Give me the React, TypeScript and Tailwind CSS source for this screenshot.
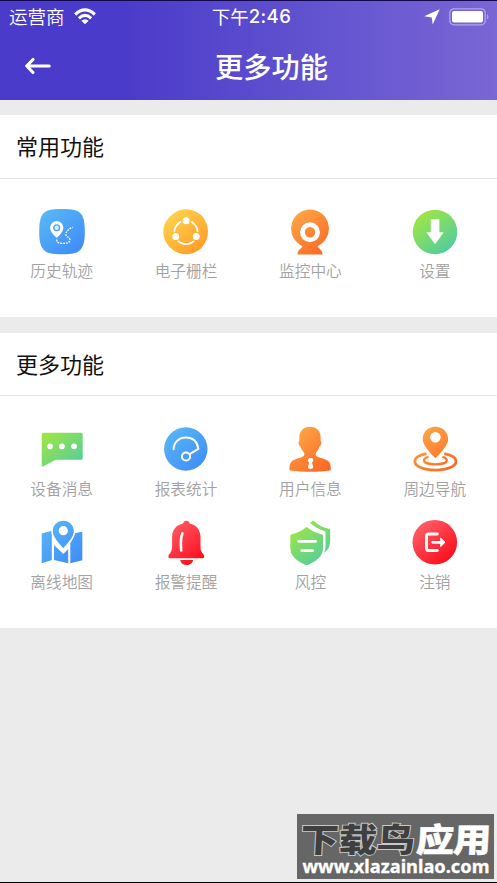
import React from "react";

const paints: Record<string, [string, string]> = {
  blue: ["#58b7f5", "#3f8cf8"],
  yellow: ["#ffd64e", "#ff9a26"],
  orange: ["#ffa947", "#fa6725"],
  green: ["#a5e83d", "#4dcba4"],
  red: ["#ff626b", "#fd0716"],
};

function Icon({ id, paint, children }: { id: string; paint: string; children: React.ReactNode }) {
  return (
    <svg viewBox="0 0 50 50" className="block size-[50px]" fill={`url(#${id})`}>
      <defs>
        <linearGradient id={id} gradientUnits="userSpaceOnUse" x1="8" y1="5" x2="42" y2="46">
          <stop offset="0" stopColor={paints[paint][0]} />
          <stop offset="1" stopColor={paints[paint][1]} />
        </linearGradient>
      </defs>
      {children}
    </svg>
  );
}

const white = { fill: "none", stroke: "#fff", strokeLinecap: "round", strokeLinejoin: "round" } as const;

const common = [
  {
    label: "历史轨迹",
    icon: (
      <Icon id="track" paint="blue">
        <path d="M25 3C36 3 41 4 44.500 8.500C47 12 47.800 18 47.800 25.700C47.800 33.500 47 39 44 43C40.500 47.500 35 48.300 25 48.300C15 48.300 9.500 47.500 6 43C3 39 2.200 33.500 2.200 25.700C2.200 18 3 12 5.500 8.500C9 4 14 3 25 3Z" />
        <path fill="#fff" d="M19.700 15a6.600 6.600 0 0 1 6.600 6.600c0 4-3.600 7.600-6.600 10.400c-3-2.800-6.600-6.400-6.600-10.400a6.600 6.600 0 0 1 6.600-6.600Z" />
        <circle cx="19.700" cy="21.800" r="2.900" fill="#d9edff" stroke="#4ba3f7" strokeWidth="1.300" />
        <path {...white} strokeLinecap="butt" strokeWidth="1.300" strokeDasharray="1.800 1" d="M19.700 33.500c.2 3 2 3.800 5 3.800c4 0 8 .2 8.200-3.300c.2-3-4.500-3.200-4-6c.3-3 3.600-5.600 6.800-6.700" />
      </Icon>
    ),
  },
  {
    label: "电子栅栏",
    icon: (
      <Icon id="fence" paint="yellow">
        <path d="M24.600 3.200C31 3 37 6 40.500 9.500C44.500 13.500 47 20 47 25.800C47 32 44 38 40.500 41.700C36.500 46 31 48.200 24.600 48.200C18 48.200 12.500 45 8.800 41.300C5 37.500 2.300 32 2.300 25.800C2.300 19 5 15 8.700 11C12.500 6.500 18 3.400 24.600 3.200Z" />
        <circle cx="25" cy="26.300" r="11.700" {...white} strokeWidth="1.800" />
        <g stroke="url(#fence)" strokeWidth="1.600" fill="#fff">
          <circle cx="25" cy="14.800" r="4.300" />
          <circle cx="14.700" cy="30.500" r="4.300" />
          <circle cx="35.200" cy="30.500" r="4.300" />
        </g>
      </Icon>
    ),
  },
  {
    label: "监控中心",
    icon: (
      <Icon id="camera" paint="orange">
        <path d="M25 3.500a19 19 0 0 1 12 33.700c-1.300 1.200-3.400 2.200-4.200 3c-.5 1.500 4.500 3.500 4.700 7.200q0 1.200-1 1.200h-23q-1 0-1-1.200c.2-3.700 5.200-5.700 4.700-7.200c-.8-.8-2.900-1.800-4.200-3A19 19 0 0 1 25 3.500Z" />
        <circle cx="25" cy="26.300" r="7.600" {...white} strokeWidth="4.800" />
      </Icon>
    ),
  },
  {
    label: "设置",
    icon: (
      <Icon id="settings" paint="green">
        <circle cx="25" cy="26" r="22.300" />
        <path fill="#fff" d="M20.800 13.300h8.600v12.900h4.400L25.100 38.200L16.400 26.200h4.400Z" />
      </Icon>
    ),
  },
];

const more = [
  {
    label: "设备消息",
    icon: (
      <Icon id="message" paint="green">
        <path d="M6.200 8.700H44.200q1.500 0 1.500 1.500v24q0 1.500-1.500 1.500H18.700L7 42.100q-2.300 1-2.300-1.300V10.200q0-1.500 1.500-1.500Z" />
        <g fill="#fff">
          <circle cx="13" cy="22.300" r="2.900" />
          <circle cx="24.900" cy="22.300" r="2.900" />
          <circle cx="37" cy="22.300" r="2.900" />
        </g>
      </Icon>
    ),
  },
  {
    label: "报表统计",
    icon: (
      <Icon id="report" paint="blue">
        <circle cx="24.800" cy="25" r="21.700" />
        <path {...white} strokeWidth="2" d="M12.600 25.300C12.800 18 18 13.500 25 13.500C32 13.500 36.300 18 37.400 24.800L28.600 30.200" />
        <circle cx="25" cy="32.500" r="4.100" {...white} strokeWidth="2" />
      </Icon>
    ),
  },
  {
    label: "用户信息",
    icon: (
      <Icon id="user" paint="orange">
        <path d="M25 2.700c6.700 0 10.600 4.300 10.600 10.600q0 2 .1 3.600c1.500 1.300.4 4.600-1.200 5.500c-1.200 4.500-3.900 5.600-3.900 7.600c.2 3.800 5.600 3.200 11.400 6.200c3.200 1.800 3.800 5 3.800 9.300q0 .9-.9 1c-12 1.700-27.500 1.700-39.500 0q-1-.1-1-1c0-4.300.7-7.500 3.900-9.300c5.800-3 11-2.400 11.200-6.200c0-2-2.800-3.100-4-7.600c-1.600-.9-2.700-4.200-1.200-5.500q.1-1.600.1-3.600C14.400 7 18.300 2.700 25 2.700Z" />
        <path fill="#fff" d="M24.300 34h2.800q1.500 1 1.100 2.800l-1.200 2l1.200 4.200q-.2 1.800-2.600 2q-2.400-.2-2.700-2l1.200-4.200l-1.200-2q-.2-1.800 1.400-2.800Z" />
      </Icon>
    ),
  },
  {
    label: "周边导航",
    icon: (
      <Icon id="navigation" paint="orange">
        <g fill="none" stroke="url(#navigation)">
          <path strokeWidth="2.800" d="M16.500 29.600C9 31 4.800 33.600 4.800 37.200C4.800 42.300 13.500 46.100 25.400 46.100S46 42.300 46 37.200C46 33.600 41.800 31 34.300 29.600" />
          <path strokeWidth="2.300" d="M18.500 32.800C15.500 33.600 14 34.800 14 36.400C14 38.700 18.800 40.300 25.400 40.300S36.800 38.700 36.800 36.400C36.800 34.800 35.300 33.600 32.300 32.800" />
        </g>
        <path fillRule="evenodd" d="M25.400 2.700c7.100 0 12.700 5.400 12.700 12.200c0 6.300-7 13.300-12.700 19.300c-5.700-6-12.700-13-12.700-19.300c0-6.800 5.600-12.200 12.700-12.200Zm0 5.200a5.300 5.300 0 1 0 0 10.600a5.300 5.300 0 1 0 0-10.600Z" />
      </Icon>
    ),
  },
  {
    label: "离线地图",
    icon: (
      <Icon id="map" paint="blue">
        <path d="M4.700 16.500L14.800 13.700V43L4.700 46.300ZM17 28L26.300 37L31.200 32V46.300L17 43ZM33.300 17L45.300 14.700V43.300L33.300 46.300Z" />
        <path stroke="#fff" strokeWidth="4" d="M26.300 4.300c5.600 0 10 4.400 10 10c0 6-5.200 11-10 16.800c-4.800-5.800-10-10.800-10-16.800c0-5.600 4.400-10 10-10Z" />
        <path d="M26.300 3.700c5.900 0 10.500 4.600 10.500 10.400c0 6.200-5.600 11.300-10.500 17.200c-4.900-5.900-10.500-11-10.500-17.200c0-5.800 4.600-10.400 10.500-10.400Z" />
        <circle cx="26.300" cy="13.700" r="4.600" fill="#fff" />
      </Icon>
    ),
  },
  {
    label: "报警提醒",
    icon: (
      <Icon id="alarm" paint="red">
        <path d="M25.400 3.700c1.800 0 3 1 3.300 2.800C35.500 8 39.500 13 39.500 20v9c0 4 .8 6.500 3.200 8.500q1.300 3.800-1.200 3.800H9q-2.500 0-1.200-3.800c2.400-2 3.300-4.500 3.300-8.500v-9c0-7 4-12 11-13.500c.3-1.800 1.500-2.800 3.300-2.800ZM19.200 43h12.900c-.5 3-3 5-6.500 5s-5.900-2-6.400-5Z" />
        <path {...white} strokeWidth="2.600" d="M21.400 16.400C19.700 20 19.700 27 20.200 33.500" />
      </Icon>
    ),
  },
  {
    label: "风控",
    icon: (
      <Icon id="risk" paint="green">
        <path d="M28 3.600C33 8 38 10.800 44.500 12q.7.100.7.900V24c0 5-2 9-6 11.700q1.300-3 1.300-7V15.500q0-1.300-1.200-1.600C33.500 12.200 29.500 9.700 25 5.900Z" />
        <path d="M21.600 10Q29 15.700 37 17.500q1.100.3 1.100 1.300V31C38 39.500 31 44.500 22.800 47.900q-1.100.4-2.200 0C12.500 44.500 5.400 39.500 5.300 31V18.800q0-1 1.100-1.300Q14.200 15.700 21.600 10Z" />
        <path {...white} strokeWidth="2.700" d="M13.600 24.300H30.700M16.700 33.700H27.700" />
      </Icon>
    ),
  },
  {
    label: "注销",
    icon: (
      <Icon id="logout" paint="red">
        <circle cx="24.800" cy="25.200" r="22.300" />
        <path {...white} strokeWidth="2.900" d="M27.300 17H18.500q-2 0-2 2V31.500q0 2 2 2H27.300" />
        <path {...white} strokeWidth="2.800" d="M22.800 25.300H31" />
        <path fill="#fff" stroke="#fff" strokeLinejoin="round" d="M30.700 21L35 25.300L30.700 29.600Z" />
      </Icon>
    ),
  },
];

function Grid({ items }: { items: typeof common }) {
  return (
    <div className="-ml-[0.5px] grid grid-cols-4">
      {items.map((item) => (
        <div key={item.label} className="flex h-[93px] flex-col items-center">
          {item.icon}
          <span className="mt-[3px] text-[15.7px] leading-6 font-[350] whitespace-nowrap text-[#a2a2a2]">{item.label}</span>
        </div>
      ))}
    </div>
  );
}

export default function App() {
  return (
    <div className="flex h-[883px] w-[497px] flex-col overflow-hidden border-b border-black bg-[#ebebeb] font-['Noto_Sans_CJK_SC',sans-serif]">
      <header className="h-[100px] shrink-0 border-t border-[#130750] bg-linear-to-r from-[#4b3bca] from-25% to-[#7a66d4] text-white">
        <div className="grid h-8 grid-cols-3 items-center px-[9px] text-[18.5px] leading-8">
          <div className="flex items-center gap-[9px]">
            <span className="-mt-[2px] font-[350]">运营商</span>
            <svg viewBox="0 0 22 17" className="-mt-[2px] h-[17px] w-[22px]" fill="none" stroke="#fff" strokeWidth="3.100">
              <path d="M1.200 6.500Q11-2.700 20.800 6.500M4.900 10.300Q11 4.500 17.100 10.300" />
              <path fill="#fff" stroke="none" d="M7.300 12.700Q11 9.600 14.700 12.700L11 16.300Z" />
            </svg>
          </div>
          <div className="-mt-[2px] flex justify-center pl-[6px] whitespace-nowrap">
            <span>下午</span>
            <span className="font-['Inter'] font-medium tracking-[0.4px]">2:46</span>
          </div>
          <div className="-mt-px flex items-center justify-end gap-[9px] pr-[2px]">
            <svg viewBox="0 0 16 16" className="size-4" fill="#fff">
              <path d="M15.700.2L8.700 15.600L7.700 8.400L.2 7.300Z" />
            </svg>
            <svg viewBox="0 0 41 18" className="-mr-1 h-[18px] w-[41px]">
              <rect x=".8" y=".8" width="35.400" height="16" rx="4" fill="none" stroke="#b2a6ec" strokeWidth="1.300" />
              <rect x="3" y="3" width="31" height="11.600" rx="2" fill="#fff" />
              <path d="M38 6q3 2.800 0 5.600Z" fill="#b2a6ec" />
            </svg>
          </div>
        </div>
        <div className="grid h-[67px] grid-cols-[94px_1fr_44px] items-center">
          <svg viewBox="0 0 26 18" className="-mt-[2px] ml-[25px] h-[18px] w-[26px]" {...white} strokeWidth="3.100">
            <path d="M24.200 9H2M8 2.500L1.700 9L8 15.500" />
          </svg>
          <h1 className="-mt-[3px] pr-[4px] text-center text-[28.3px] leading-[65px] font-medium">更多功能</h1>
        </div>
      </header>
      <main className="flex flex-col gap-4 pt-[15px]">
        <section className="h-[202px] bg-white">
          <h2 className="h-16 border-b border-[#e3e3e3] pl-4 text-[22px] leading-[61px] text-[#111]">常用功能</h2>
          <div className="pt-[27px]">
            <Grid items={common} />
          </div>
        </section>
        <section className="h-[295px] bg-white">
          <h2 className="h-[63px] border-b border-[#e3e3e3] pl-4 text-[22px] leading-[60px] text-[#111]">更多功能</h2>
          <div className="pt-[28px]">
            <Grid items={more} />
          </div>
        </section>
      </main>
      <aside className="mt-auto mr-[3px] mb-[3px] h-[65px] w-[197px] self-end bg-[#666]">
        <svg viewBox="0 0 197 65" className="block h-[65px] w-[197px]">
          <g fontFamily="Noto Sans CJK SC, sans-serif" fontSize="35" fontWeight="900" transform="translate(3 38) skewX(-3) scale(1.09 .95)">
            <text x="0" y="0" textLength="105" fill="#3f3f3f" stroke="#c8c8c8" strokeWidth="2" paintOrder="stroke">下载鸟</text>
            <text x="106" y="0" textLength="69" fill="#fff" stroke="#fff" strokeWidth=".4">应用</text>
          </g>
          <text x="5.500" y="59" textLength="187" lengthAdjust="spacingAndGlyphs" fontFamily="Noto Sans, sans-serif" fontSize="18" fontWeight="700" fill="#fff" stroke="#fff" strokeWidth=".3">www.xlazainlao.com</text>
        </svg>
      </aside>
    </div>
  );
}
